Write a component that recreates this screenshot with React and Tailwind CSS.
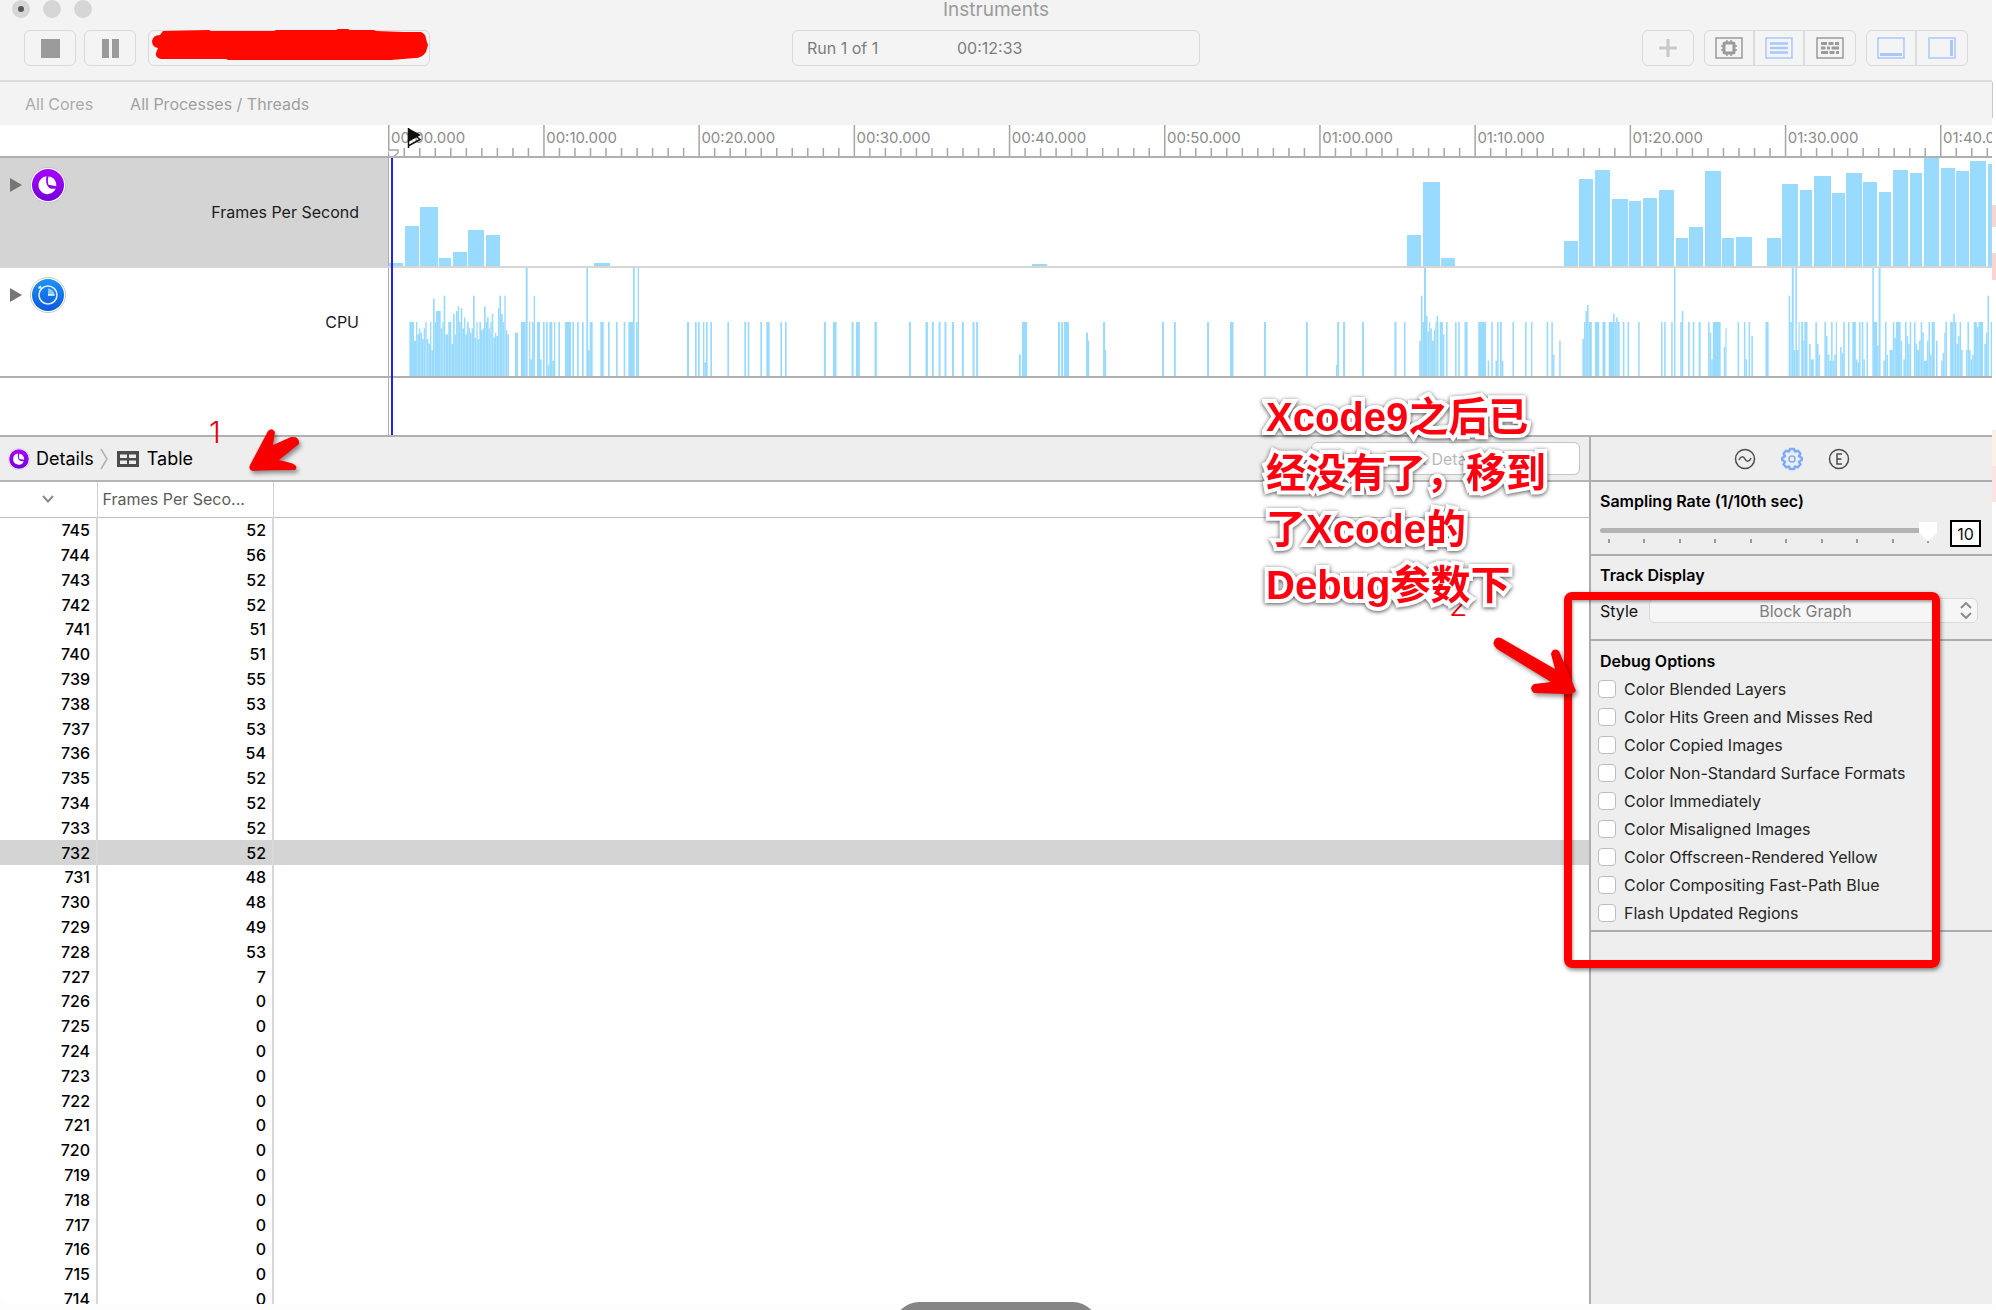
import React from "react";

/* ---------- track data ---------- */

// Frames-per-second blocks: [left, right, height] in timeline pixels.
const fpsBlocks = [
  [1, 15, 3], [17, 31, 40], [32, 50, 59], [51, 63, 8], [65, 79, 14], [80, 96, 36], [98, 112, 31],
  [206, 222, 3], [644, 659, 2], [1019, 1033, 31], [1035, 1052, 84], [1053, 1067, 8],
  [1176, 1190, 25], [1191, 1205, 87], [1207, 1222, 96], [1224, 1240, 67], [1241, 1253, 65],
  [1255, 1269, 68], [1271, 1286, 76], [1288, 1300, 28], [1301, 1315, 39], [1317, 1333, 95],
  [1334, 1346, 28], [1348, 1364, 29], [1379, 1393, 28], [1394, 1410, 82], [1412, 1424, 76],
  [1426, 1443, 90], [1444, 1457, 73], [1458, 1474, 93], [1475, 1489, 84], [1491, 1503, 74],
  [1505, 1520, 96], [1522, 1534, 93], [1536, 1551, 108], [1553, 1567, 98], [1568, 1581, 95],
  [1582, 1598, 105], [1600, 1616, 102],
];

// CPU samples "start-end" with an optional ":level"; 474 is full load, 798 is idle.
const cpuSegments = [
  {
    origin: -8,
    scale: 3,
    samples:
      "88-102 102-108:692 108-112 112-117:673 117-121:655 121-126:668 126-131:687 131-136:655 136-140 140-145:687 145-150:701 150-154 154-159:720 159-164:566 164-168 168-182:603 182-187:655 187-191 191-196:557 196-205:673 205-214 214-219:701 219-224:612 224-228:673 228-233:603 233-237:589 237-242 242-247:594 247-252:655 252-256:622 256-261:673 261-266 266-270:655 270-275:668 275-279:655 279-284:557 284-289:683 289-293 293-298:687 298-303 303-308:660 308-312:655 312-317:589 317-321 321-326:622 326-331:655 331-335 335-340:612 340-345:683 345-349:668 349-354:678 354-358:594 358-363:557 363-368:612 368-373 373-377:557 377-382:660 382-387:673 405-414:668 423-437 437-443:473 447-451 451-456:748 456-461 461-465:557 471-480 480-485:748 489-494 498-503 503-508:766 508-517 517-522:752 522-526 535-540 555-573 577-582 591-596 606-611 619-624:473 624-629:720 629-638 661-671 684-689 708-713 731-736 745-759 759-764:473 768-773 773-777:473 921-927 945-950 954-959 969-973 973-978:757 978-983 991-996 1042-1047 1093-1098 1103-1108 1141-1146 1159-1169 1201-1206 1215-1220",
  },
  {
    origin: 392,
    scale: 2.529,
    samples:
      "111-116 134-143 181-186 192-202 239-245 326-331 368-374 384-389 401-406 416-421 435-440 460-465 487-492 496-501 604-609:733 612-625 703-708 711-716 718-731 774-779:668 779-782:692 817-822 822-825:720 966-971 996-1001 1080-1085 1138-1147 1224-1229 1330-1335 1406-1409:765 1409-1414 1424-1429 1472-1477 1554-1559",
  },
  {
    origin: 992,
    scale: 2.545,
    samples:
      "61-65 100-104:692 104-108:557 108-112 112-117:473 117-121:617 121-125:664 125-128 128-132:655 132-137:692 137-141:660 141-144 144-148:617 148-149 152-160 160-164:673 168-172 191-195 199-203 215-223 250-270 274-278:752 283-287 294-298:752 298-302 305-310 310-314:752 337-341 369-373 384-388 424-428 436-440 440-444:734 456-460:692 515-519:687 519-523 523-527:603 527-531:585 531-539 547-558 566-574 582-593 593-597:612 597-601 601-605:622 605-610 618-622 630-634 657-661 715-719 723-727 741-745 748-752:473 764-768 768-772:603 784-788 796-800 811-816 835-839 839-843:668 843-847:748 847-867 875-879:711 879-882:655 910-914 926-930 930-934:748 938-942 945-949:678 981-989 1040-1044:557 1044-1048 1048-1053:473 1053-1057:720 1057-1061:473 1061-1065:720 1065-1068 1072-1077 1077-1080:692 1080-1088 1092-1096:701 1096-1104:748 1108-1112 1112-1116:701 1116-1120:734 1131-1135 1135-1139:678 1139-1144:734 1144-1148:752 1148-1152 1152-1156:752 1156-1160:734 1160-1163 1171-1175:711 1175-1179:729 1179-1183 1191-1195 1202-1211 1211-1215:748 1215-1219:757 1219-1223 1226-1230 1230-1234:748 1238-1242 1253-1257:473 1257-1265 1265-1269:706 1269-1274:473 1281-1285:752 1285-1289 1289-1293:734 1297-1305:720 1305-1309 1309-1313:683 1313-1325 1325-1329:692 1332-1336:748 1336-1340 1340-1344:678 1344-1348:701 1348-1352 1359-1363 1363-1367:701 1367-1372:720 1372-1376:692 1376-1380 1380-1384:668 1384-1392:752 1392-1396:692 1396-1400 1400-1404:734 1404-1412 1415-1419:692 1428-1432:752 1432-1436:729 1436-1439:668 1439-1443 1451-1459 1459-1463:612 1463-1467 1467-1471:701 1471-1475:678 1475-1479 1479-1483:720 1491-1495:720 1495-1499 1499-1503:720 1503-1507:748 1507-1511:734 1511-1519 1519-1523:650 1523-1535 1538-1542:701 1542-1546:668 1546-1550:557 1554-1558",
  },
];

const cpuBars = cpuSegments.flatMap(({ origin, scale, samples }) =>
  samples.split(" ").map((s) => {
    const [range, level = "636"] = s.split(":");
    const [a, b] = range.split("-").map(Number);
    return { x: origin + a / scale, w: (b - a) / scale, h: (798 - Number(level)) / 3 };
  })
);

const TEN_SECONDS = 155.2;
const rulerLabels = [
  "00:00.000", "00:10.000", "00:20.000", "00:30.000", "00:40.000", "00:50.000",
  "01:00.000", "01:10.000", "01:20.000", "01:30.000", "01:40.000",
];

const frames = [52, 56, 52, 52, 51, 51, 55, 53, 53, 54, 52, 52, 52, 52, 48, 48, 49, 53, 7];
const tableRows = Array.from({ length: 32 }, (_, i) => ({ id: 745 - i, fps: frames[i] ?? 0 }));

const debugOptions = [
  "Color Blended Layers",
  "Color Hits Green and Misses Red",
  "Color Copied Images",
  "Color Non-Standard Surface Formats",
  "Color Immediately",
  "Color Misaligned Images",
  "Color Offscreen-Rendered Yellow",
  "Color Compositing Fast-Path Blue",
  "Flash Updated Regions",
];

/* ---------- icons ---------- */

function AnimationIcon({ className }) {
  return (
    <svg viewBox="0 0 36 36" className={className} aria-hidden="true">
      <defs>
        <linearGradient id="purple" x1="0" y1="0" x2="0" y2="1">
          <stop offset="0" stopColor="#a800ff" />
          <stop offset="1" stopColor="#7400dc" />
        </linearGradient>
      </defs>
      <circle cx="18" cy="18" r="17.6" fill="#fff" stroke="#bbb" strokeWidth=".8" />
      <circle cx="18" cy="18" r="16" fill="url(#purple)" />
      <path d="M16.5 9.2A9 9 0 1 0 25.8 21.5C20 23 14.500 19.500 16.500 9.200Z" fill="#fff" />
      <path d="M18.600 9.600C23.500 10 26.500 14 26.300 19.200L18.500 17.800C17.600 15 17.600 12 18.600 9.600Z" fill="#fff" />
    </svg>
  );
}

function CpuIcon({ className }) {
  return (
    <svg viewBox="0 0 36 36" className={className} aria-hidden="true">
      <defs>
        <linearGradient id="blue" x1="0" y1="0" x2="0" y2="1">
          <stop offset="0" stopColor="#1a94f5" />
          <stop offset="1" stopColor="#1058dc" />
        </linearGradient>
      </defs>
      <circle cx="18" cy="18" r="17.6" fill="#fff" stroke="#bbb" strokeWidth=".8" />
      <circle cx="18" cy="18" r="16" fill="url(#blue)" />
      <circle cx="18" cy="18" r="9" fill="none" stroke="#e4f2ff" strokeWidth="1.5" />
      <path d="M18 18V11.500A6.500 6.500 0 0 1 24.500 18Z" fill="#8ec8fa" />
      <path d="M18 18h6.500" stroke="#fff" strokeWidth="1.5" />
      <path d="M9 9.500l3 2.500M8.500 11.500l2.500-2.500" stroke="#e4f2ff" strokeWidth="1.500" />
    </svg>
  );
}

function ChipIcon() {
  return (
    <svg width="28" height="22" viewBox="0 0 28 22" fill="none" stroke="#9a9a9a" aria-hidden="true">
      <rect x="1" y="1" width="26" height="20" strokeWidth="1.500" />
      <rect x="9" y="6" width="10" height="10" rx="1" strokeWidth="3" />
      <path d="M12 3v2M16 3v2M12 17v2M16 17v2M6 9h2M6 13h2M20 9h2M20 13h2" strokeWidth="1.500" />
    </svg>
  );
}

function LinesIcon() {
  return (
    <svg width="28" height="22" viewBox="0 0 28 22" fill="none" stroke="#a9c7fb" aria-hidden="true">
      <rect x="1" y="1" width="26" height="20" strokeWidth="1.500" />
      <path d="M5 6.500h18M5 11h18M5 15.500h18" strokeWidth="2.500" />
    </svg>
  );
}

function BricksIcon() {
  return (
    <svg width="28" height="22" viewBox="0 0 28 22" fill="none" stroke="#9a9a9a" aria-hidden="true">
      <rect x="1" y="1" width="26" height="20" strokeWidth="1.500" />
      <path d="M5 6.500h6M12.500 6.500h5M19 6.500h4M5 11h4.500M11 11h3M15.500 11h7.500M5 15.500h7M13.500 15.500h5M20 15.500h3" strokeWidth="2.800" />
    </svg>
  );
}

function PaneIcon({ side }) {
  return (
    <svg width="28" height="22" viewBox="0 0 28 22" fill="none" stroke="#a9c7fb" aria-hidden="true">
      <rect x="1" y="1" width="26" height="20" strokeWidth="1.500" />
      <path d={side ? "M23.500 3v16" : "M3 17.500h22"} strokeWidth="3" />
    </svg>
  );
}

/* ---------- building blocks ---------- */

function ToolButton({ label, className = "", children }) {
  return (
    <button aria-label={label} className={`flex h-full w-[50px] items-center justify-center ${className}`}>
      {children}
    </button>
  );
}

const frame = "h-[36px] overflow-hidden rounded-md border border-[#d9d9d9] bg-[#f4f4f4]";

function Toolbar() {
  return (
    <header className="border-b-2 border-[#dcdcdc] pb-[14px]">
      <div className="grid h-[30px] grid-cols-[1fr_auto_1fr] px-3 text-[19px] leading-[20px] text-[#9b9b9b]">
        <div className="flex gap-[13px]">
          <span className="flex size-[18px] items-center justify-center rounded-full bg-[#d6d6d6]">
            <span className="size-[6px] rounded-full bg-[#555]" />
          </span>
          <span className="size-[18px] rounded-full bg-[#d6d6d6]" />
          <span className="size-[18px] rounded-full bg-[#d6d6d6]" />
        </div>
        <h1>Instruments</h1>
      </div>
      <div className="grid grid-cols-[1fr_408px_1fr] px-6">
        <div className="flex">
          <div className={frame}>
            <ToolButton label="Stop"><span className="size-[19px] bg-[#9b9b9b]" /></ToolButton>
          </div>
          <div className={`${frame} ml-2`}>
            <ToolButton label="Pause">
              <span className="flex gap-[3px]">
                <span className="h-[19px] w-[7px] bg-[#9b9b9b]" />
                <span className="h-[19px] w-[7px] bg-[#9b9b9b]" />
              </span>
            </ToolButton>
          </div>
          <div className={`${frame} relative ml-3 w-[282px] overflow-visible`}>
            <svg className="absolute -top-[2px] left-0" width="282" height="36" viewBox="0 0 282 36" aria-hidden="true">
              <path d="M14 2L60 1 62 2 125 2 127 1 187 1 189 0 199 0 201 1 225 1 227 2 254 3 272 3Q277 5 277 10L279 16 277 23Q273 29 266 29L242 31 79 31 77 30 12 30Q6 29 7 24L9 19Q3 18 3 12 4 6 11 6Z" fill="#ff0800" />
            </svg>
          </div>
        </div>
        <div className={`${frame} flex items-center pl-[14px] text-[16px] text-[#7d7d7d]`}>
          <span className="w-[150px]">Run 1 of 1</span>
          <span>00:12:33</span>
        </div>
        <div className="flex justify-end gap-[10px]">
          <div className={frame}>
            <ToolButton label="Add instrument">
              <svg width="20" height="20" viewBox="0 0 20 20" stroke="#c9c9c9" strokeWidth="3" aria-hidden="true">
                <path d="M10 1v18M1 10h18" />
              </svg>
            </ToolButton>
          </div>
          <div className={`${frame} flex divide-x-2 divide-[#dcdcdc]`}>
            <ToolButton label="CPU view"><ChipIcon /></ToolButton>
            <ToolButton label="Instruments view"><LinesIcon /></ToolButton>
            <ToolButton label="Threads view"><BricksIcon /></ToolButton>
          </div>
          <div className={`${frame} flex divide-x-2 divide-[#dcdcdc]`}>
            <ToolButton label="Toggle bottom pane"><PaneIcon /></ToolButton>
            <ToolButton label="Toggle side pane"><PaneIcon side /></ToolButton>
          </div>
        </div>
      </div>
    </header>
  );
}

function Ruler() {
  return (
    <svg className="block h-[31px] w-full" aria-hidden="true">
      {Array.from({ length: 104 }, (_, i) => {
        const major = i % 10 === 0;
        return (
          <rect key={i} x={(i * TEN_SECONDS) / 10} y={major ? 0 : 23} width="1.500" height={major ? 31 : 8} fill="#a6a6a6" />
        );
      })}
      {rulerLabels.map((t, i) => (
        <text key={t} x={i * TEN_SECONDS + 3} y="18" fontSize="15" fill="#8c8c8c">{t}</text>
      ))}
      <path d="M0 25H10V28L3 34" fill="#fff" stroke="#a6a6a6" strokeWidth="1.500" />
      <path d="M20 3L33 10 20 17Z" fill="#111" />
      <path d="M20.500 3v20M21 20.500L32 14.500 29 12" fill="none" stroke="#111" strokeWidth="1.500" />
      <path d="M22 19L22 16.500 29 13Z" fill="#fff" />
    </svg>
  );
}

function TrackHead({ icon, name, selected }) {
  return (
    <div className={`flex w-[388px] flex-none items-center pr-[29px] pl-[10px] ${selected ? "bg-[#d4d4d4]" : ""}`}>
      <button aria-label={`Expand ${name}`} className="self-start pt-[20px]">
        <svg width="12" height="14" viewBox="0 0 12 14" aria-hidden="true"><path d="M0 0L12 7 0 14Z" fill="#767676" /></svg>
      </button>
      <div className="ml-2 self-start pt-[9px]">{icon}</div>
      <span className="ml-auto text-[16px] text-[#1c1c1c]">{name}</span>
    </div>
  );
}

function Timeline() {
  return (
    <section className="relative border-b-2 border-[#b0b0b0] bg-white">
      <div className="flex border-b-2 border-[#b0b0b0]">
        <div className="w-[388px] flex-none" />
        <div className="min-w-0 flex-1"><Ruler /></div>
      </div>
      <div className="flex h-[110px] border-b-2 border-[#d6d6d6]">
        <TrackHead selected name="Frames Per Second" icon={<AnimationIcon className="size-[36px]" />} />
        <div className="min-w-0 flex-1 border-l border-[#b0b0b0]">
          <svg className="block h-[108px] w-full" role="img" aria-label="Frames per second graph">
            {fpsBlocks.map(([a, b, h]) => (
              <rect key={a} x={a - 1} y={108 - h} width={b - a} height={h} fill="#99daff" />
            ))}
          </svg>
        </div>
      </div>
      <div className="flex h-[110px] border-b-2 border-[#b0b0b0]">
        <TrackHead name="CPU" icon={<CpuIcon className="size-[36px]" />} />
        <div className="min-w-0 flex-1 border-l border-[#b0b0b0]">
          <svg className="block h-[108px] w-full" role="img" aria-label="CPU graph">
            {cpuBars.map((b, i) => (
              <rect key={i} x={b.x - 1} y={108 - b.h} width={b.w} height={b.h} fill="#99daff" />
            ))}
          </svg>
        </div>
      </div>
      <div className="ml-[388px] h-[57px] border-l border-[#b0b0b0]" />
      <div className="absolute top-[33px] bottom-0 left-[391px] w-[2px] bg-[#2222e8]" />
    </section>
  );
}

function Details() {
  return (
    <section className="min-w-0 flex-1 bg-white">
      <div className="flex h-[45px] items-center border-b-2 border-[#b4b4b4] bg-[#eeeeee] pr-[9px] pl-2 text-[18px] text-black">
        <AnimationIcon className="size-[22px]" />
        <span className="ml-[6px]">Details</span>
        <svg className="ml-[6px]" width="8" height="22" viewBox="0 0 8 22" fill="none" stroke="#b0b0b0" strokeWidth="1.500" aria-hidden="true">
          <path d="M1 1L7 11 1 21" />
        </svg>
        <svg className="ml-[9px]" width="22" height="16" viewBox="0 0 22 16" aria-hidden="true">
          <rect width="22" height="16" fill="#4c4c4c" />
          <path d="M3 3.500h7v3.500H3zM12 3.500h7v3.500h-7zM3 9.500h7V13H3zM12 9.500h7V13h-7z" fill="#eee" />
        </svg>
        <span className="ml-2">Table</span>
        <label className="ml-auto flex h-[33px] w-[269px] items-center rounded-md border border-[#c4c4c4] bg-white pl-[6px]">
          <svg width="20" height="20" viewBox="0 0 20 20" fill="none" stroke="#555" strokeWidth="1.500" aria-hidden="true">
            <circle cx="9" cy="9" r="7" />
            <path d="M14 14l5 5" />
          </svg>
          <input
            aria-label="Instrument Detail"
            placeholder="Instrument Detail"
            className="ml-2 w-[200px] bg-transparent text-[16px] outline-none placeholder:text-[#b9b9b9]"
          />
        </label>
      </div>
      <table className="w-full table-fixed border-collapse text-[16px] text-black">
        <colgroup>
          <col className="w-[97px]" />
          <col className="w-[176px]" />
          <col />
        </colgroup>
        <thead>
          <tr className="h-[35px] border-b border-[#bdbdbd] text-[#5c5c5c]">
            <th className="border-r border-[#d0d0d0]" aria-label="Sample">
              <svg className="mx-auto" width="12" height="8" viewBox="0 0 12 8" fill="none" stroke="#8a8a8a" strokeWidth="2" aria-hidden="true">
                <path d="M1 1L6 6.500 11 1" />
              </svg>
            </th>
            <th className="border-r border-[#d0d0d0] pl-[5px] text-left font-normal">Frames Per Seco...</th>
            <th aria-label="Empty" />
          </tr>
        </thead>
        <tbody>
          {tableRows.map((r) => (
            <tr
              key={r.id}
              className={`h-[25px] text-right leading-[24px] font-medium nth-[5n]:h-[24px] ${r.id === 732 ? "bg-[#d4d4d4]" : ""}`}
            >
              <td className="border-r-2 border-[#dcd6d8] pr-[6px]">{r.id}</td>
              <td className="border-r-2 border-[#dcd6d8] pr-[6px]">{r.fps}</td>
              <td />
            </tr>
          ))}
        </tbody>
      </table>
    </section>
  );
}

function Inspector() {
  return (
    <aside className="w-[403px] flex-none border-l-2 border-[#adadad] bg-[#eeeeee] text-[16px] leading-[20px] text-[#111]">
      <div className="flex h-[45px] items-center justify-center gap-6 border-b-2 border-[#adadad]">
        <button aria-label="Record settings">
          <svg width="22" height="22" viewBox="0 0 22 22" fill="none" stroke="#4d4d4d" strokeWidth="1.500" aria-hidden="true">
            <circle cx="11" cy="11" r="9.500" />
            <path d="M5 12C6.500 8 9.500 8 11 11S15.500 14 17 10" />
          </svg>
        </button>
        <button aria-label="Display settings">
          <svg width="24" height="24" viewBox="0 0 24 24" fill="none" stroke="#7eabf7" strokeWidth="2.500" strokeLinejoin="round" aria-hidden="true">
            <path d="M10 2h4l1 2.500 3-.8 2.500 3-1.500 2.500 2.800 1.800v2l-2.800 1.800 1.500 2.500-2.500 3-3-.8-1 2.500h-4l-1-2.500-3 .8-2.500-3L5 14.800 2.200 13v-2L5 9.200 3.500 6.700l2.500-3 3 .8Z" />
            <circle cx="12" cy="12" r="3" strokeWidth="1.500" />
          </svg>
        </button>
        <button aria-label="Extended detail">
          <svg width="22" height="22" viewBox="0 0 22 22" fill="none" stroke="#4d4d4d" strokeWidth="1.500" aria-hidden="true">
            <circle cx="11" cy="11" r="9.500" />
            <path d="M14 6H9v10h5M9 11h4.500" />
          </svg>
        </button>
      </div>

      <div className="h-[74px] border-b-2 border-[#adadad] pt-[9px] pr-[11px] pl-[9px]">
        <label htmlFor="rate" className="font-semibold text-black">Sampling Rate (1/10th sec)</label>
        <div className="flex items-start justify-between pt-[9px]">
          <div className="w-[337px]">
            <input
              id="rate"
              type="range"
              min="1"
              max="10"
              defaultValue="10"
              className="block h-[20px] w-full appearance-none bg-transparent [&::-webkit-slider-runnable-track]:h-[5px] [&::-webkit-slider-runnable-track]:rounded-full [&::-webkit-slider-runnable-track]:bg-[#b3b3b3] [&::-webkit-slider-thumb]:-mt-[6px] [&::-webkit-slider-thumb]:h-[20px] [&::-webkit-slider-thumb]:w-[18px] [&::-webkit-slider-thumb]:appearance-none [&::-webkit-slider-thumb]:bg-white [&::-webkit-slider-thumb]:[clip-path:polygon(0_0,100%_0,100%_55%,50%_100%,0_55%)]"
            />
            <div className="flex justify-between px-2 -mt-px">
              {Array.from({ length: 10 }, (_, i) => (
                <span key={i} className="h-[4px] w-[2px] bg-[#9b9b9b]" />
              ))}
            </div>
          </div>
          <input
            aria-label="Sampling rate value"
            defaultValue="10"
            className="h-[27px] w-[31px] border-2 border-black bg-white text-center text-[16px] outline-none"
          />
        </div>
      </div>

      <div className="h-[85px] border-b-2 border-[#adadad] pt-[9px] pr-[14px] pl-[9px]">
        <h2 className="font-semibold text-black">Track Display</h2>
        <div className="flex items-center justify-between pt-[13px]">
          <label htmlFor="style">Style</label>
          <div className="relative w-[329px]">
            <select
              id="style"
              className="h-[25px] w-full appearance-none rounded-md border border-[#dadada] bg-[#f6f6f6] pr-[16px] text-center text-[16px] text-[#7d7d7d]"
            >
              <option>Block Graph</option>
            </select>
            <svg className="pointer-events-none absolute top-[4px] right-[6px]" width="12" height="17" viewBox="0 0 12 17" fill="none" stroke="#8c8c8c" strokeWidth="2" aria-hidden="true">
              <path d="M1 6L6 1 11 6M1 11L6 16 11 11" />
            </svg>
          </div>
        </div>
      </div>

      <fieldset className="border-b-2 border-[#adadad] pb-[3px] pl-[7px]">
        <legend className="float-left w-full pt-[10px] pb-1 pl-[2px] font-semibold text-black">Debug Options</legend>
        {debugOptions.map((o) => (
          <label key={o} className="clear-both flex h-[28px] items-center gap-2 text-[#262626]">
            <input
              type="checkbox"
              className="size-[18px] appearance-none rounded-[4px] border border-[#bdbdbd] bg-white checked:bg-blue-500"
            />
            {o}
          </label>
        ))}
      </fieldset>
    </aside>
  );
}

/* Red hand-drawn notes lying over the window. */
function Annotations() {
  return (
    <div className="pointer-events-none absolute inset-0">
      <span className="absolute top-[415px] left-[209px] text-[30px] leading-[34px] font-light text-red-600">1</span>
      <span className="absolute top-[588px] left-[1449px] text-[30px] leading-[34px] font-light text-red-600">2</span>
      <svg className="absolute top-[425px] left-[245px] drop-shadow-[2px_3px_2px_rgba(0,0,0,0.4)]" width="60" height="50" viewBox="0 0 60 50" aria-hidden="true">
        <path d="M23 6Q27 2 30 7L28 20 46 12Q55 11 54 19L34 35 46 38Q54 41 50 45 25 45 8 46 3 45 5 40Z" fill="#f80000" />
      </svg>
      <div className="absolute top-[592px] left-[1564px] h-[376px] w-[376px] rounded-lg border-8 border-[#ff0000] shadow-[1px_2px_4px_rgba(0,0,0,0.5),inset_1px_2px_3px_rgba(0,0,0,0.35)]" />
      <svg className="absolute top-[632px] left-[1488px] drop-shadow-[2px_3px_2px_rgba(0,0,0,0.4)]" width="96" height="70" viewBox="0 0 96 70" aria-hidden="true">
        <path d="M6 9Q8 4 13 6L67 37 63 22Q65 15 71 19L80 40 88 59Q84 63 77 62L46 61Q40 56 46 52L63 50 9 17Q4 13 6 9Z" fill="#f80000" />
      </svg>
      <p className="absolute top-[389px] left-[1266px] w-72 font-[Liberation_Sans,Noto_Sans_CJK_SC,sans-serif] text-[40px] leading-[56px] font-bold text-[#ff0010] [paint-order:stroke_fill] [-webkit-text-stroke:8px_white] drop-shadow-[0_1px_2px_rgba(0,0,0,0.7)]">
        Xcode9之后已经没有了，移到了Xcode的Debug参数下
      </p>
    </div>
  );
}

function Gutter() {
  return (
    <div className="flex w-1 flex-none flex-col bg-white" aria-hidden="true">
      <span className="mt-[82px] h-[36px] w-px bg-[#c8c8c8]" />
      <span className="mt-[87px] h-[22px] bg-[#fbd3d3]" />
      <span className="mt-[26px] h-[27px] bg-[#fbd3d3]" />
      <span className="mt-[150px] h-[36px] bg-[#fdf1e6]" />
      <span className="h-[36px] bg-[#fde4e4]" />
    </div>
  );
}

export default function App() {
  return (
    <div className="relative flex h-screen flex-col overflow-hidden bg-[#fdfdfd] pb-[6px] font-[Inter,sans-serif]">
      <div className="flex min-h-0 flex-1">
        <main className="flex min-w-0 flex-1 flex-col overflow-hidden rounded-bl-lg bg-[#f3f3f3]">
          <Toolbar />
          <nav className="flex h-[43px] flex-none items-center gap-[37px] pl-[25px] text-[16px] text-[#9f9f9f]">
            <button className="text-[#ababab]">All Cores</button>
            <button>All Processes / Threads</button>
          </nav>
          <Timeline />
          <div className="flex min-h-0 flex-1">
            <Details />
            <Inspector />
          </div>
        </main>
        <Gutter />
      </div>
      <div className="absolute bottom-0 left-[894px] h-2 w-[204px] overflow-hidden">
        <div className="h-[50px] rounded-[28px] bg-[#858585]" />
      </div>
      <Annotations />
    </div>
  );
}
